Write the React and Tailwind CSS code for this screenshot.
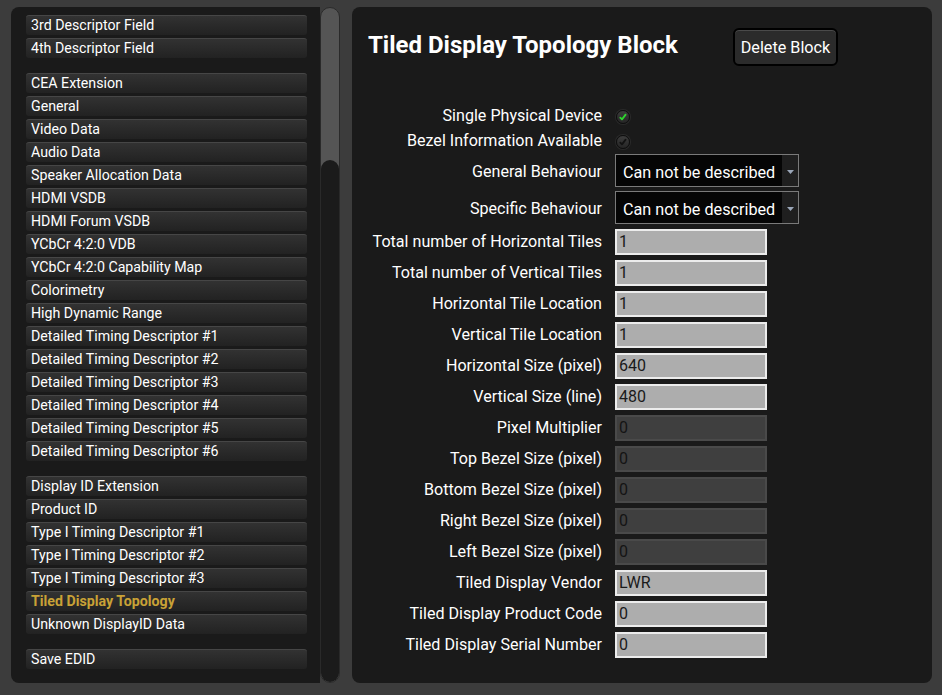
import React from "react";

const groups = [
  ["3rd Descriptor Field", "4th Descriptor Field"],
  [
    "CEA Extension",
    "General",
    "Video Data",
    "Audio Data",
    "Speaker Allocation Data",
    "HDMI VSDB",
    "HDMI Forum VSDB",
    "YCbCr 4:2:0 VDB",
    "YCbCr 4:2:0 Capability Map",
    "Colorimetry",
    "High Dynamic Range",
    "Detailed Timing Descriptor #1",
    "Detailed Timing Descriptor #2",
    "Detailed Timing Descriptor #3",
    "Detailed Timing Descriptor #4",
    "Detailed Timing Descriptor #5",
    "Detailed Timing Descriptor #6",
  ],
  [
    "Display ID Extension",
    "Product ID",
    "Type I Timing Descriptor #1",
    "Type I Timing Descriptor #2",
    "Type I Timing Descriptor #3",
    "Tiled Display Topology",
    "Unknown DisplayID Data",
  ],
  ["Save EDID"],
];

const inputs = [
  ["Total number of Horizontal Tiles", "1", true],
  ["Total number of Vertical Tiles", "1", true],
  ["Horizontal Tile Location", "1", true],
  ["Vertical Tile Location", "1", true],
  ["Horizontal Size (pixel)", "640", true],
  ["Vertical Size (line)", "480", true],
  ["Pixel Multiplier", "0", false],
  ["Top Bezel Size (pixel)", "0", false],
  ["Bottom Bezel Size (pixel)", "0", false],
  ["Right Bezel Size (pixel)", "0", false],
  ["Left Bezel Size (pixel)", "0", false],
  ["Tiled Display Vendor", "LWR", true],
  ["Tiled Display Product Code", "0", true],
  ["Tiled Display Serial Number", "0", true],
];

function NavItem({ label }) {
  const active = label === "Tiled Display Topology";
  return (
    <div
      className={`h-[20px] rounded-[3px] border-t border-[#464646] bg-gradient-to-b from-[#323232] to-[#222222] pl-[5px] text-[14.2px] leading-[19px] ${
        active ? "font-bold text-[#c9a236]" : "text-white"
      }`}
    >
      {label}
    </div>
  );
}

function Label({ children, extra = "" }) {
  return (
    <div className={`w-[250px] shrink-0 text-right text-[16.1px] text-white ${extra}`}>
      {children}
    </div>
  );
}

function Check({ checked }) {
  return (
    <div className="ml-[14px] flex h-[14px] w-[14px] items-center justify-center rounded-full border border-[#0e0e0e] bg-gradient-to-b from-[#3c3c3c] to-[#262626] shadow-[0_0_0_1px_#2a2a2a]">
      <svg width="10" height="10" viewBox="0 0 10 10">
        <path
          d="M2.3 5.6 L4 7.4 L7.6 2.6"
          fill="none"
          stroke={checked ? "#2fd42f" : "#121212"}
          strokeWidth="1.8"
          strokeLinecap="round"
          strokeLinejoin="round"
        />
      </svg>
    </div>
  );
}

function Select() {
  return (
    <div className="ml-[13px] flex h-[33px] w-[184px] border border-[#7a7a7a] bg-[#050505]">
      <div className="flex flex-1 items-center pl-[7px] pt-[6px] text-[16.2px] text-white">
        Can not be described
      </div>
      <div className="flex w-[16px] items-center justify-center bg-[#1f1f1f] pt-[2px]">
        <svg width="7" height="4" viewBox="0 0 7 4">
          <path d="M0 0 H7 L3.5 4 Z" fill="#9aa6b8" />
        </svg>
      </div>
    </div>
  );
}

export default function App() {
  return (
    <div
      className="flex h-[695px] w-[942px] overflow-hidden bg-[#3c3c3c] pt-[7px]"
      style={{ fontFamily: "Roboto, 'Noto Sans', sans-serif" }}
    >
      {/* left panel */}
      <div className="ml-[11px] flex h-[676px] w-[309px] flex-col rounded-l-[8px] bg-[#1a1a1a] pl-[15px] pr-[13px] pt-[8px]">
        {groups.map((g, gi) => (
          <div key={gi} className={`flex flex-col gap-[3px] ${gi > 0 ? "mt-[15px]" : ""}`}>
            {g.map((l) => (
              <NavItem key={l} label={l} />
            ))}
          </div>
        ))}
      </div>
      {/* scrollbar */}
      <div className="flex h-[676px] w-[20px] flex-col overflow-hidden rounded-[10px] border border-[#2a2a2a] bg-[#555555]">
        <div className="h-[152px] shrink-0" />
        <div className="flex-1 rounded-t-[10px] bg-[#1b1b1b]" />
      </div>
      {/* right panel */}
      <div className="ml-[12px] flex h-[676px] w-[580px] flex-col rounded-[8px] bg-[#1a1a1a]">
        <div className="mt-[21px] flex h-[38px] items-center pl-[16px]">
          <div className="w-[365px] pb-[4px] text-[24px] font-bold leading-[30px] text-white">
            Tiled Display Topology Block
          </div>
          <div className="flex h-[38px] w-[105px] items-center justify-center rounded-[6px] border-2 border-black bg-[#2b2b2b] pt-[3px] text-[16.2px] text-white shadow-[inset_0_1px_0_#4a4a4a]">
            Delete Block
          </div>
        </div>

        <div className="mt-[37px] flex flex-col">
          <div className="flex h-[25px] items-center pt-[2px]">
            <Label>Single Physical Device</Label>
            <Check checked />
          </div>
          <div className="flex h-[25px] items-center pt-[2px]">
            <Label>Bezel Information Available</Label>
            <Check checked={false} />
          </div>
          <div className="mt-[1px] flex items-center">
            <Label extra="pt-[3px]">General Behaviour</Label>
            <Select />
          </div>
          <div className="mt-[4px] flex items-center">
            <Label extra="pt-[3px]">Specific Behaviour</Label>
            <Select />
          </div>
          {inputs.map(([label, value, enabled]) => (
            <div key={label} className="mt-[5px] flex items-center">
              <Label>{label}</Label>
              <div
                className={`ml-[13px] flex h-[26px] w-[152px] items-center pl-[2px] text-[16px] ${
                  enabled
                    ? "border-2 border-[#ececec] bg-[#adadad] text-[#1a1a1a]"
                    : "border-2 border-[#4a4a4a] bg-[#3f3f3f] text-[#141414]"
                }`}
              >
                {value}
              </div>
            </div>
          ))}
        </div>
      </div>
    </div>
  );
}
